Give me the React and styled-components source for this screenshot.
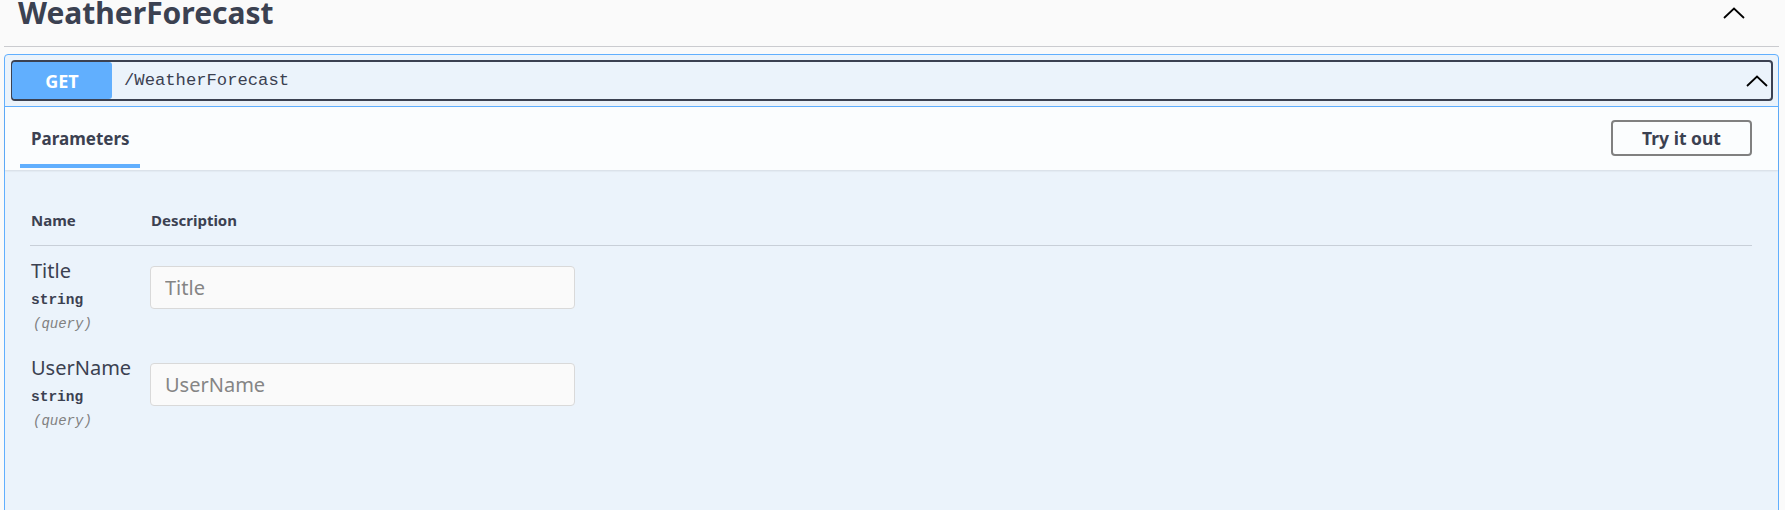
import React from 'react';
import styled, { createGlobalStyle } from 'styled-components';

const GlobalStyle = createGlobalStyle`
  html, body {
    margin: 0;
    padding: 0;
    background: #fafafa;
    overflow: hidden;
  }
  * {
    box-sizing: border-box;
  }
`;

const Page = styled.div`
  font-family: "Noto Sans", "Open Sans", sans-serif;
  color: #3b4151;
  padding: 0 6px 0 4px;
`;

const TagHeader = styled.div`
  display: flex;
  align-items: flex-start;
  height: 47px;
  border-bottom: 1px solid rgba(59, 65, 81, 0.25);
  padding-left: 14px;
`;

const TagTitle = styled.h3`
  flex: 1;
  margin: 0;
  font-size: 30px;
  line-height: 26px;
  font-weight: 700;
  color: #3b4151;
`;

const ChevronButton = styled.button`
  display: flex;
  border: none;
  background: none;
  padding: 0;
  margin: ${p => p.$top || 0}px ${p => p.$right || 0}px 0 0;
  cursor: pointer;
`;

const Opblock = styled.div`
  margin-top: 7px;
  border: 1px solid #61affe;
  border-radius: 4px;
  background: #ebf3fb;
  min-height: 520px;
`;

const SummaryWrap = styled.div`
  padding: 5px 5px 5px 6px;
  border-bottom: 1px solid #61affe;
`;

const Summary = styled.div`
  display: flex;
  align-items: center;
  height: 41px;
  border: 2px solid #3b4151;
  border-radius: 4px;
  padding-right: 1px;
`;

const MethodBadge = styled.span`
  width: 100px;
  align-self: stretch;
  display: flex;
  align-items: center;
  justify-content: center;
  background: #61affe;
  color: #fff;
  font-size: 18px;
  font-weight: 700;
  border-radius: 3px;
  margin-left: -1px;
`;

const PathText = styled.span`
  flex: 1;
  margin-left: 12px;
  font-family: "Liberation Mono", "DejaVu Sans Mono", monospace;
  font-size: 17.2px;
  color: #3b4151;
`;

const SectionHeader = styled.div`
  display: flex;
  align-items: center;
  height: 63px;
  padding: 0 26px 2px 15px;
  background: rgba(255, 255, 255, 0.8);
  box-shadow: 0 1px 2px rgba(0, 0, 0, 0.1);
`;

const Tab = styled.div`
  align-self: flex-start;
  padding: 20px 10px 13px 11px;
  line-height: 24px;
  font-size: 17px;
  font-weight: 700;
  border-bottom: 4px solid #61affe;
`;

const Spacer = styled.div`
  flex: 1;
`;

const TryButton = styled.button`
  height: 36px;
  width: 141px;
  border: 2px solid #808080;
  border-radius: 4px;
  background: transparent;
  font-family: "Noto Sans", "Open Sans", sans-serif;
  font-size: 17.5px;
  font-weight: 700;
  color: #3b4151;
  padding: 0;
  cursor: pointer;
`;

const Params = styled.div`
  padding: 40px 26px 100px 25px;
`;

const HeadRow = styled.div`
  display: grid;
  grid-template-columns: 120px 1fr;
  padding-bottom: 15px;
  border-bottom: 1px solid rgba(59, 65, 81, 0.2);
`;

const HeadCell = styled.div`
  font-size: 15px;
  line-height: 20px;
  font-weight: 700;
  padding-left: ${p => p.$pad || 0}px;
`;

const ParamRow = styled.div`
  display: grid;
  grid-template-columns: 120px 1fr;
  padding-bottom: 10px;
`;

const NameCell = styled.div`
  padding: 13px 0 0 1px;
`;

const ParamName = styled.div`
  font-size: 20px;
  line-height: 24px;
  color: #3b4151;
`;

const ParamType = styled.div`
  margin-top: 8px;
  font-family: "Liberation Mono", "DejaVu Sans Mono", monospace;
  font-size: 14.5px;
  line-height: 18px;
  font-weight: 700;
  color: #3b4151;
`;

const ParamIn = styled.div`
  margin-top: 6px;
  padding-left: 2px;
  font-family: "Liberation Mono", "DejaVu Sans Mono", monospace;
  font-size: 14px;
  line-height: 18px;
  font-style: italic;
  color: #808080;
`;

const DescCell = styled.div`
  padding-top: 20px;
`;

const TextInput = styled.input`
  width: 425px;
  height: 43px;
  border: 1px solid #d9d9d9;
  border-radius: 4px;
  background: #fafafa;
  padding: 0 14px;
  font-family: "Noto Sans", "Open Sans", sans-serif;
  font-size: 20px;
  color: #3b4151;
  outline: none;
  &::placeholder {
    color: #858585;
  }
`;

const Chevron = () => (
  <svg width="22" height="12" viewBox="0 0 22 12">
    <polyline points="1,11 11,1.5 21,11" fill="none" stroke="#000" strokeWidth="1.8" />
  </svg>
);

const params = [
  { name: 'Title', type: 'string', in: '(query)' },
  { name: 'UserName', type: 'string', in: '(query)' },
];

export default function App() {
  return (
    <Page>
      <GlobalStyle />
      <TagHeader>
        <TagTitle>WeatherForecast</TagTitle>
        <ChevronButton $top={7} $right={34}><Chevron /></ChevronButton>
      </TagHeader>
      <Opblock>
        <SummaryWrap>
          <Summary>
            <MethodBadge>GET</MethodBadge>
            <PathText>/WeatherForecast</PathText>
            <ChevronButton $right={2}><Chevron /></ChevronButton>
          </Summary>
        </SummaryWrap>
        <SectionHeader>
          <Tab>Parameters</Tab>
          <Spacer />
          <TryButton>Try it out</TryButton>
        </SectionHeader>
        <Params>
          <HeadRow>
            <HeadCell $pad={1}>Name</HeadCell>
            <HeadCell $pad={1}>Description</HeadCell>
          </HeadRow>
          {params.map(p => (
            <ParamRow key={p.name}>
              <NameCell>
                <ParamName>{p.name}</ParamName>
                <ParamType>{p.type}</ParamType>
                <ParamIn>{p.in}</ParamIn>
              </NameCell>
              <DescCell>
                <TextInput placeholder={p.name} />
              </DescCell>
            </ParamRow>
          ))}
        </Params>
      </Opblock>
    </Page>
  );
}
